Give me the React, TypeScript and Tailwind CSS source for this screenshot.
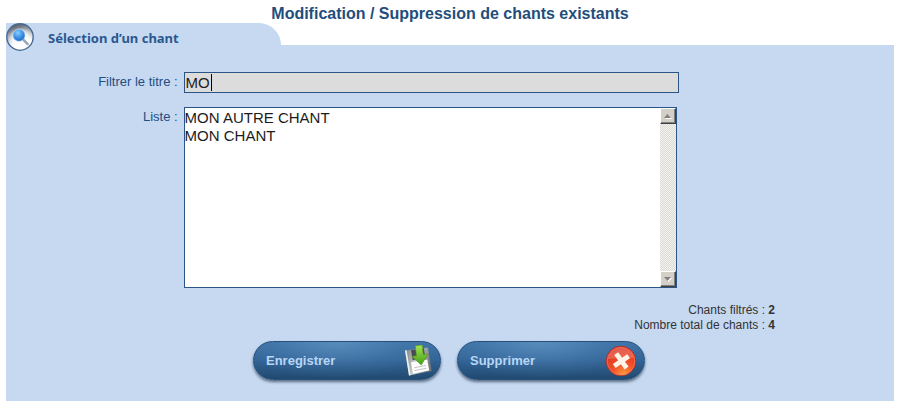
import { useState } from "react";

const SONGS = ["MON AUTRE CHANT", "MON CHANT", "AUTRE TITRE", "PREMIER CHANT"];

function SearchBadge() {
  return (
    <svg viewBox="0 0 28 28" className="h-7 w-7 shrink-0" aria-hidden="true">
      <defs>
        <linearGradient id="badge" x1="0.3" y1="0" x2="0.6" y2="1">
          <stop offset="0" stopColor="#4b535c" />
          <stop offset="0.35" stopColor="#a4abb3" />
          <stop offset="0.75" stopColor="#ffffff" />
        </linearGradient>
        <radialGradient id="glow" cx="0.5" cy="0.55" r="0.5">
          <stop offset="0" stopColor="#ffffff" />
          <stop offset="0.6" stopColor="#ffffff" stopOpacity="0.8" />
          <stop offset="1" stopColor="#ffffff" stopOpacity="0" />
        </radialGradient>
        <radialGradient id="lens" cx="0.4" cy="0.3" r="0.75">
          <stop offset="0" stopColor="#8accff" />
          <stop offset="0.5" stopColor="#3f97ea" />
          <stop offset="1" stopColor="#1c62bd" />
        </radialGradient>
      </defs>
      <circle cx="14" cy="14" r="13.2" fill="url(#badge)" stroke="#486a92" strokeWidth="1.4" />
      <circle cx="14.5" cy="15" r="12" fill="url(#glow)" />
      <path d="M17.5 16.8l4.2 4.3" stroke="#97a3b1" strokeWidth="2.4" strokeLinecap="round" />
      <circle cx="13" cy="12.3" r="6" fill="url(#lens)" stroke="#a9cdf2" strokeWidth="0.6" />
    </svg>
  );
}

function SaveIcon() {
  return (
    <svg viewBox="0 0 30 34" className="h-[34px] w-[30px]" aria-hidden="true">
      <defs>
        <linearGradient id="disk" x1="0" y1="0" x2="1" y2="0.3">
          <stop offset="0" stopColor="#777b7e" />
          <stop offset="0.5" stopColor="#c8caca" />
          <stop offset="1" stopColor="#77797a" />
        </linearGradient>
        <linearGradient id="arrow" x1="0" y1="0" x2="0" y2="1">
          <stop offset="0" stopColor="#a5e455" />
          <stop offset="1" stopColor="#429f12" />
        </linearGradient>
      </defs>
      <path d="M2 6.5L25 3.5L28.5 27L6 31.5Z" fill="url(#disk)" />
      <path d="M2 6.5L3.6 6.3L7.6 31.2L6 31.5Z" fill="#f2f2f2" />
      <path d="M8 6L21 4.2L22.2 14L9.6 16Z" fill="#454b50" />
      <path d="M8 18.3L24.3 15.5L26.2 26.5L10 29.8Z" fill="#fdfdfd" />
      <path d="M11 23.8L23 21.5M11.5 26.6L23.5 24.2" stroke="#b5b5b5" strokeWidth="0.8" />
      <path
        d="M12.3 1.8L19.2 1L20.3 10.5L25 10L18.3 21L8.8 12.4L13.4 11.7Z"
        fill="url(#arrow)"
        stroke="#4b9623"
        strokeWidth="0.6"
      />
    </svg>
  );
}

function DeleteIcon() {
  return (
    <svg viewBox="0 0 32 32" className="h-8 w-8" aria-hidden="true">
      <defs>
        <radialGradient id="red" cx="0.6" cy="0.95" r="0.95">
          <stop offset="0" stopColor="#ff9a3c" />
          <stop offset="0.4" stopColor="#f2502a" />
          <stop offset="1" stopColor="#d8301f" />
        </radialGradient>
      </defs>
      <circle cx="16" cy="16" r="14.8" fill="url(#red)" stroke="#a92b24" strokeWidth="0.8" />
      <circle cx="16" cy="16" r="13.8" fill="none" stroke="#ff8b72" strokeWidth="0.8" opacity="0.7" />
      <path d="M2.8 14A13.3 13.3 0 0 1 29 13Q17 12 2.8 14Z" fill="#ffffff" opacity="0.2" />
      <path d="M11.2 8.6L21.6 23M23.6 11.2L9.2 21" stroke="#fff3e8" strokeWidth="4.8" />
    </svg>
  );
}

function PillButton({ label, icon }: { label: string; icon: React.ReactNode }) {
  return (
    <button
      type="button"
      className="flex h-[39px] w-[188px] items-center justify-between rounded-full border border-[#28507c] bg-[radial-gradient(ellipse_at_45%_0%,#6a9dcd99_0%,#4f83b544_45%,transparent_70%),linear-gradient(to_bottom,#3f73a6_0%,#346699_45%,#20496f_100%)] pr-[7px] pl-3 text-[13px] font-bold text-[#b8d6f5] shadow-[0_2px_3px_#5a6b80]"
    >
      {label}
      {icon}
    </button>
  );
}

function ScrollButton({ label, path }: { label: string; path: string }) {
  return (
    <button
      type="button"
      aria-label={label}
      className="flex h-4 w-4 items-center justify-center border border-t-white border-r-[#404040] border-b-[#404040] border-l-white bg-[#d4d0c8] shadow-[inset_-1px_-1px_0_#808080]"
    >
      <svg viewBox="0 0 8 5" className="h-[5px] w-2">
        <path d={path} fill="#ffffff" transform="translate(1 1)" />
        <path d={path} fill="#808080" />
      </svg>
    </button>
  );
}

export default function App() {
  const [filter, setFilter] = useState("MO");
  const filtered = SONGS.filter((song) => song.startsWith(filter.toUpperCase()));

  return (
    <main className="bg-white px-[6px] pb-[6px] font-['Liberation_Sans',Arial,sans-serif] text-[12px] text-[#1f4e82]">
      <h1 className="h-[23px] pt-1 text-center text-[16px] leading-[19px] font-bold text-[#1f4e7c]">
        Modification / Suppression de chants existants
      </h1>

      {/* Tab */}
      <div className="flex h-[22px] w-[275px] items-start gap-[14px] rounded-tr-[22px] bg-[#c6d9f1]">
        <div className="relative z-10">
          <SearchBadge />
        </div>
        <h2 className="relative z-10 font-['Noto_Sans','Open_Sans',sans-serif] text-[13px] leading-[30px] font-bold text-[#2b5790]">
          Sélection d’un chant
        </h2>
      </div>

      <form className="bg-[#c6d9f1] pt-[27px] pb-[21px]" onSubmit={(e) => e.preventDefault()}>
        <div className="grid grid-cols-[20%_1fr] gap-y-[14px]">
          <label htmlFor="filter" className="pr-[6px] text-right text-[13px] leading-[20px]">
            Filtrer le titre :
          </label>
          <div className="relative w-[70%] pr-[2px]">
            <input
              id="filter"
              value={filter}
              onChange={(e) => setFilter(e.target.value)}
              className="block h-[21px] w-full border border-[#2b5585] bg-[#dcdcdc] px-px pt-[2px] text-[15px] text-[#1c1c1c] caret-transparent outline-none"
            />
            <span className="absolute top-[2px] left-[27px] h-[17px] w-px bg-black" />
          </div>

          <label htmlFor="songs" className="pr-[6px] text-right text-[13px] leading-[20px]">
            Liste :
          </label>
          <div className="flex h-[181px] w-[70%] pr-[4px]">
            <div className="flex min-w-0 flex-1 border border-[#2b5585] bg-white">
              <select
                id="songs"
                size={9}
                className="min-w-0 flex-1 overflow-hidden text-[15px] leading-[17px] text-[#1c1c1c] outline-none"
              >
                {filtered.map((song) => (
                  <option key={song} className="h-[18px] px-0 pt-px">
                    {song}
                  </option>
                ))}
              </select>
              <div className="flex w-4 flex-col justify-between bg-[#f4f3f0] bg-[repeating-conic-gradient(#dcdad4_0%_25%,transparent_0%_50%)] bg-[length:2px_2px]">
                <ScrollButton label="Monter" path="M0 4L3.5 0L7 4Z" />
                <ScrollButton label="Descendre" path="M0 0L3.5 4L7 0Z" />
              </div>
            </div>
          </div>
        </div>

        <div className="mt-[15px] pr-[119px] text-right leading-[15px] text-[#333333]">
          <p>
            Chants filtrés : <b>{filtered.length}</b>
          </p>
          <p>
            Nombre total de chants : <b>{SONGS.length}</b>
          </p>
        </div>

        <div className="mt-2 flex justify-center gap-4 pr-[2px]">
          <PillButton label="Enregistrer" icon={<SaveIcon />} />
          <PillButton label="Supprimer" icon={<DeleteIcon />} />
        </div>
      </form>
    </main>
  );
}
